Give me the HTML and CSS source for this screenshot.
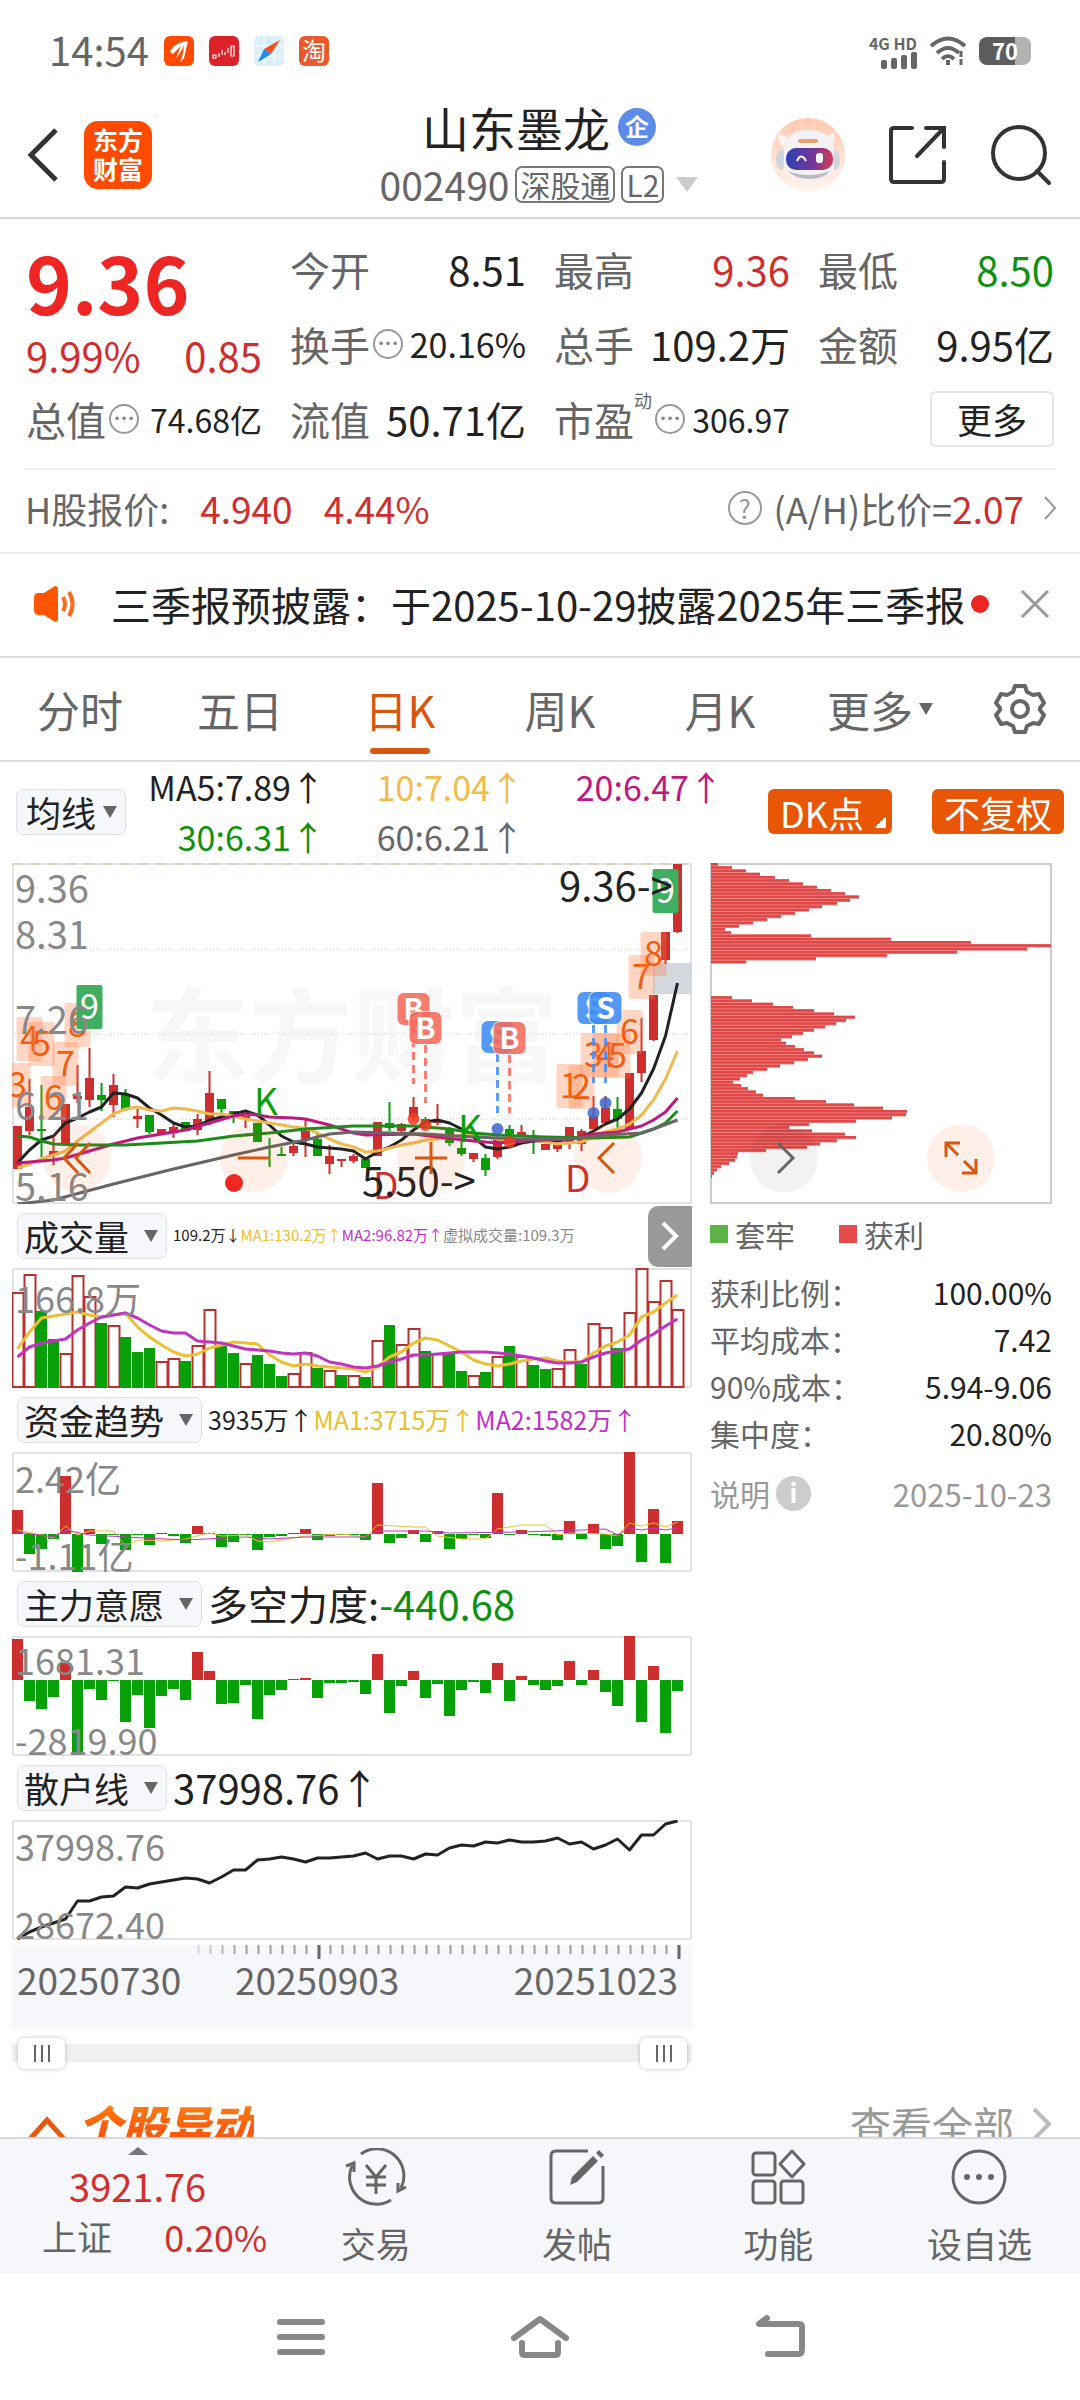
FILE: index.html
```html
<!DOCTYPE html>
<html lang="zh-CN">
<head>
  <meta charset="UTF-8" />
  <meta name="viewport" content="width=device-width, initial-scale=1.0"/>
  <title>山东墨龙 002490</title>
  <link rel="stylesheet" href="styles.css">
</head>
<body>
  <div class="status-bar">
    <span class="clock">14:54</span>
    <svg class="app-dot" viewBox="0 0 30 30"><rect width="30" height="30" rx="6" fill="#ff4a00"/><path d="M6 15C10 9 15 6 24 5L20 22Q18 25 16 26Q20 17 20 9Q17 17 12 22Q15 15 17 10Q12 15 9 18Q7 18 6 15Z" fill="#fff"/></svg>
    <svg class="app-dot" viewBox="0 0 30 30"><rect width="30" height="30" rx="6" fill="#dc2128"/><path d="M4 19h3v3H4zM10 17v4M13 14v5M16 16v3M19 12v5M22 10h3v10h-3z" fill="none" stroke="#fff" stroke-width="1.2"/></svg>
    <svg class="app-dot" viewBox="0 0 30 30"><rect width="30" height="30" rx="6" fill="#dceefb"/><path d="M10 0V30M20 0V30M0 10H30M0 20H30" stroke="#fff"/><path d="M26 4L10 13L17 18Z" fill="#f4501e"/><path d="M4 26L10 13L17 18Z" fill="#1e8df2"/></svg>
    <span class="app-dot app-tao">淘</span>
    <span class="status-right">
      <span class="signal"><span>4G HD</span>
        <svg viewBox="0 0 36 17" width="36" height="17" fill="#666"><rect y="8" width="6" height="9" rx="2"/><rect x="10" y="6" width="6" height="11" rx="2"/><rect x="20" y="3" width="6" height="14" rx="2"/><rect x="30" width="6" height="17" rx="2"/></svg>
      </span>
      <svg viewBox="0 0 38 30" width="38" height="30" fill="none" stroke="#666" stroke-width="4"><path d="M2 10Q19 -5 36 10M8 17Q19 7 30 17"/><path d="M13 23Q19 17 25 23"/><path d="M19 24v5"/><path d="M32 15v6M32 23v6" stroke-width="3"/></svg>
      <span class="battery">70</span>
    </span>
  </div>

  <header>
    <div class="header-left">
      <button class="icon-btn" aria-label="返回"><svg viewBox="0 0 34 56" width="34" height="56" fill="none" stroke="#333" stroke-width="5"><path d="M30 3L5 28L30 53"/></svg></button>
      <a class="logo" href="#">东方<br>财富</a>
    </div>
    <div class="header-title">
      <h1>山东墨龙<span class="corp">企</span></h1>
      <p class="code">002490<span class="tag">深股通</span><span class="tag">L2</span><i class="tri"></i></p>
    </div>
    <div class="header-right">
      <button class="icon-btn" aria-label="助手">
        <svg viewBox="0 0 76 76" width="76" height="76">
          <defs><linearGradient id="halo" x2="0" y2="1"><stop stop-color="#ffc9ae"/><stop offset="1" stop-color="#fff6f0"/></linearGradient><linearGradient id="visor"><stop stop-color="#2c3fb4"/><stop offset=".6" stop-color="#7a3796"/><stop offset="1" stop-color="#d23b55"/></linearGradient></defs>
          <circle cx="38" cy="38" r="37" fill="url(#halo)"/>
          <path d="M9 16Q12 20 18 18L14 30Q6 24 9 16ZM63 15Q60 20 54 18L60 30Q68 24 63 15Z" fill="#f8f4f4"/>
          <ellipse cx="11" cy="43" rx="5" ry="10" fill="#d2d3dc"/><ellipse cx="65" cy="43" rx="5" ry="10" fill="#d2d3dc"/>
          <path d="M14 36Q14 13 38 13Q62 13 64 36V50Q62 61 38 61Q16 61 14 50Z" fill="#f4f2f5"/>
          <path d="M18 54Q38 62 60 54Q54 62 38 62Q24 61 18 54Z" fill="#b9bac6"/>
          <rect x="28" y="22" width="20" height="4" rx="2" fill="#e7a173"/>
          <rect x="16" y="31" width="47" height="22" rx="10" fill="url(#visor)"/>
          <path d="M27 44Q31 35 36 44" fill="none" stroke="#fff" stroke-width="2"/><rect x="46" y="36" width="7" height="10" rx="3" fill="#fff"/>
        </svg>
      </button>
      <button class="icon-btn" aria-label="分享"><svg viewBox="0 0 60 60" width="60" height="60" fill="none" stroke="#333" stroke-width="4" stroke-linecap="round"><path d="M24 3H6Q3 3 3 6V54Q3 57 6 57H53Q56 57 56 54V37M38 3H56V22M55 4L29 31"/></svg></button>
      <button class="icon-btn" aria-label="搜索"><svg viewBox="0 0 62 62" width="62" height="62" fill="none" stroke="#333" stroke-width="4" stroke-linecap="round"><circle cx="29" cy="29" r="26"/><path d="M47 47L59 59"/></svg></button>
    </div>
  </header>

  <main>
    <section class="quote">
      <div class="price">
        <strong>9.36</strong>
        <p><span>9.99%</span><span>0.85</span></p>
      </div>
      <div class="item"><span>今开</span><b>8.51</b></div>
      <div class="item"><span>最高</span><b class="up">9.36</b></div>
      <div class="item"><span>最低</span><b class="down">8.50</b></div>
      <div class="item"><span>换手<i class="more-dot">•••</i></span><b class="mid">20.16%</b></div>
      <div class="item"><span>总手</span><b>109.2万</b></div>
      <div class="item"><span>金额</span><b>9.95亿</b></div>
      <div class="item"><span>总值<i class="more-dot">•••</i></span><b class="small">74.68亿</b></div>
      <div class="item"><span>流值</span><b>50.71亿</b></div>
      <div class="item"><span>市盈<sup>动</sup><i class="more-dot">•••</i></span><b class="small">306.97</b></div>
      <div class="item item-btn"><button>更多</button></div>
    </section>

    <section class="h-share">
      <span>H股报价:</span><b>4.940</b><b>4.44%</b>
      <a href="#"><i class="ask">?</i>(A/H)比价=<b>2.07</b><svg viewBox="0 0 12 24" width="12" height="24" fill="none" stroke="#999" stroke-width="2"><path d="M1 1L11 12L1 23"/></svg></a>
    </section>

    <section class="news">
      <svg viewBox="0 0 44 36" width="44" height="36"><path d="M0 12Q0 7 5 7H10L21 0Q24 0 24 3V33Q24 36 21 36L10 29H5Q0 29 0 24Z" fill="#ff5500"/><path d="M29 11Q33 18 29 25M35 6Q42 18 35 30" fill="none" stroke="#ff6a1f" stroke-width="4"/></svg>
      <p>三季报预披露：于2025-10-29披露2025年三季报</p>
      <i class="red-dot"></i>
      <button class="icon-btn" aria-label="关闭"><svg viewBox="0 0 30 30" width="30" height="30" stroke="#999" stroke-width="3"><path d="M2 2L28 28M28 2L2 28"/></svg></button>
    </section>

    <nav class="tabs">
      <button>分时</button>
      <button>五日</button>
      <button class="active">日K</button>
      <button>周K</button>
      <button>月K</button>
      <button>更多<i class="tri"></i></button>
      <button class="gear" aria-label="设置"><svg viewBox="0 0 52 52" width="52" height="52" fill="none" stroke="#666" stroke-width="4" stroke-linejoin="round"><path d="M21 3H31L33 9L39 12L45 11L50 20L46 25V27L50 32L45 41L39 40L33 43L31 49H21L19 43L13 40L7 41L2 32L6 27V25L2 20L7 11L13 12L19 9Z"/><circle cx="26" cy="26" r="8"/></svg></button>
    </nav>

    <section class="ma">
      <span class="drop drop-ma"><select aria-label="均线"><option>均线</option></select></span>
      <div class="ma-list">
        <span class="c-dark">MA5:7.89↑</span>
        <span class="c-gold">10:7.04↑</span>
        <span class="c-pink">20:6.47↑</span>
        <span class="down">30:6.31↑</span>
        <span class="c-grey">60:6.21↑</span>
      </div>
      <button class="pill pill-dk">DK点</button>
      <button class="pill">不复权</button>
    </section>

    <section class="charts">
      <div class="col-k">
        <div class="chart-wrap">
          <svg id="kline" viewBox="0 0 680 341"></svg>
          <div class="tools">
            <button aria-label="快退"><svg viewBox="0 0 34 34" width="34" height="34"><path d="M18 2L4 17L18 32M30 2L16 17L30 32"/></svg></button>
            <button aria-label="缩小"><svg viewBox="0 0 34 34" width="34" height="34"><path d="M1 17H33"/></svg></button>
            <button aria-label="放大"><svg viewBox="0 0 34 34" width="34" height="34"><path d="M1 17H33M17 1V33"/></svg></button>
            <button aria-label="后退"><svg viewBox="0 0 34 34" width="34" height="34"><path d="M23 2L8 17L23 32"/></svg></button>
          </div>
        </div>

        <div class="sub-head sub-volume">
          <span class="drop"><select aria-label="指标一"><option>成交量</option></select></span>
          <p class="tiny"><span class="c-dark">109.2万↓</span><span class="c-yellow">MA1:130.2万↑</span><span class="c-purple">MA2:96.82万↑</span><span class="c-light">虚拟成交量:109.3万</span></p>
          <button class="next" aria-label="展开"><svg viewBox="0 0 18 30" width="18" height="30" fill="none" stroke="#fff" stroke-width="4"><path d="M2 2L15 15L2 28"/></svg></button>
        </div>
        <svg id="volume" viewBox="0 0 680 120"></svg>

        <div class="sub-head">
          <span class="drop"><select aria-label="指标二"><option>资金趋势</option></select></span>
          <p class="medium"><span class="c-dark">3935万↑</span><span class="c-yellow">MA1:3715万↑</span><span class="c-purple">MA2:1582万↑</span></p>
        </div>
        <svg id="fund" viewBox="0 0 680 120"></svg>

        <div class="sub-head">
          <span class="drop"><select aria-label="指标三"><option>主力意愿</option></select></span>
          <p><span class="c-dark">多空力度:</span><span class="down">-440.68</span></p>
        </div>
        <svg id="force" viewBox="0 0 680 120"></svg>

        <div class="sub-head">
          <span class="drop"><select aria-label="指标四"><option>散户线</option></select></span>
          <p><span class="c-dark">37998.76↑</span></p>
        </div>
        <svg id="retail" viewBox="0 0 680 120"></svg>
        <svg id="axis" viewBox="0 0 680 84"></svg>

        <div class="range">
          <input type="range" aria-label="开始日期" min="0" max="100" value="0">
          <input type="range" aria-label="结束日期" min="0" max="100" value="100">
        </div>
      </div>

      <aside class="col-chips">
        <div class="chart-wrap">
          <svg id="chips" viewBox="0 0 342 341"></svg>
          <div class="tools tools-right">
            <button class="grey" aria-label="前进"><svg viewBox="0 0 34 34" width="34" height="34"><path d="M11 2L26 17L11 32"/></svg></button>
            <button aria-label="全屏"><svg viewBox="0 0 34 34" width="34" height="34"><path d="M2 16V2H16M2 2L14 14M20 20L32 32M32 18V32H18"/></svg></button>
          </div>
        </div>
        <p class="legend"><i class="sq sq-green"></i><span>套牢</span><i class="sq"></i><span>获利</span></p>
        <dl>
          <div><dt>获利比例：</dt><dd>100.00%</dd></div>
          <div><dt>平均成本：</dt><dd>7.42</dd></div>
          <div><dt>90%成本：</dt><dd>5.94-9.06</dd></div>
          <div><dt>集中度：</dt><dd>20.80%</dd></div>
        </dl>
        <p class="note"><span>说明</span><i class="info">i</i><time>2025-10-23</time></p>
      </aside>
    </section>

    <section class="moves">
      <svg viewBox="0 0 38 38" width="38" height="38" fill="none" stroke="#e65a10" stroke-width="5"><path d="M2 34L19 15L36 34"/></svg>
      <h2>个股异动</h2>
      <a href="#">查看全部<svg viewBox="0 0 20 34" width="20" height="34" fill="none" stroke="#bbb" stroke-width="4"><path d="M2 2L17 17L2 32"/></svg></a>
    </section>
  </main>

  <footer>
    <a class="index" href="#"><i></i><b>3921.76</b><span>上证<em>0.20%</em></span></a>
    <button><svg viewBox="0 0 64 58" width="64" height="58" fill="none" stroke="#666" stroke-width="3"><path d="M17 6A27 27 0 0 1 57 40M47 52A27 27 0 0 1 8 18"/><path d="M2 18L10 15V24M62 39L54 43V35M22 17L32 29L42 17M22 29H42M22 37H42M32 29V46"/></svg>交易</button>
    <button><svg viewBox="0 0 58 58" width="58" height="58" fill="none" stroke="#666" stroke-width="3"><path d="M40 3H8Q3 3 3 8V50Q3 55 8 55H50Q55 55 55 50V18"/><path d="M22 37L24 29L45 8L50 13L29 34ZM48 5L51 2L56 7L53 10Z" fill="#666" stroke="none"/></svg>发帖</button>
    <button><svg viewBox="0 0 56 58" width="56" height="58" fill="none" stroke="#666" stroke-width="3"><rect x="3" y="5" width="22" height="22" rx="3"/><path d="M42 3L54 16L42 29L30 16Z" stroke-linejoin="round"/><rect x="3" y="33" width="22" height="22" rx="3"/><rect x="31" y="33" width="22" height="22" rx="3"/></svg>功能</button>
    <button><svg viewBox="0 0 58 58" width="58" height="58" fill="#666"><circle cx="29" cy="29" r="26" fill="none" stroke="#666" stroke-width="3"/><circle cx="17" cy="29" r="3"/><circle cx="29" cy="29" r="3"/><circle cx="41" cy="29" r="3"/></svg>设自选</button>
  </footer>

  <div class="sys-nav">
    <button aria-label="菜单"><svg viewBox="0 0 58 44" width="58" height="44" stroke="#888" stroke-width="6" stroke-linecap="round"><path d="M9 7H51M9 22H51M9 37H51"/></svg></button>
    <button aria-label="主页"><svg viewBox="0 0 58 44" width="58" height="44" fill="none" stroke="#888" stroke-width="6" stroke-linecap="round" stroke-linejoin="round"><path d="M3 23L29 4L55 23M11 28V37Q11 40 14 40H44Q47 40 47 37V28"/></svg></button>
    <button aria-label="返回"><svg viewBox="0 0 58 44" width="58" height="44" fill="none" stroke="#888" stroke-width="6" stroke-linecap="round" stroke-linejoin="round"><path d="M16 3L8 9H48Q51 9 51 12V34Q51 39 48 39H17"/></svg></button>
  </div>

  <script src="charts.js"></script>
</body>
</html>
```

FILE: styles.css
```css
* {
  box-sizing: border-box;
}

body {
  margin: 0;
  height: 100vh;
  display: flex;
  flex-direction: column;
  font-family: "Noto Sans CJK SC", sans-serif;
  background-color: #fff;
  color: #666;
}

h1, h2, p, dl, dd {
  margin: 0;
  font-weight: normal;
}

i, em {
  font-style: normal;
}

b {
  font-weight: normal;
}

a {
  color: inherit;
  text-decoration: none;
}

button, select {
  font-family: inherit;
  border: none;
  padding: 0;
  margin: 0;
  background: none;
  color: inherit;
  cursor: pointer;
}

svg {
  display: block;
}

.icon-btn {
  display: flex;
}

.c-dark { color: #222; }
.c-gold { color: #f3bb4a; }
.c-pink { color: #c0187e; }
.c-grey { color: #666; }
.c-light { color: #888; }
.c-yellow { color: #e8c02c; }
.c-purple { color: #c22fc8; }
.up { color: #cf2e2e !important; }
.down { color: #109010 !important; }

/* status bar */
.status-bar {
  height: 98px;
  padding: 4px 49px 0;
  display: flex;
  align-items: center;
  gap: 15px;
  flex: none;
}

.clock {
  font-size: 40px;
  line-height: 50px;
  padding-bottom: 4px;
}

.app-dot {
  width: 30px;
  height: 30px;
}

.app-tao {
  border-radius: 6px;
  background-color: #e8592b;
  color: #fff;
  font-size: 24px;
  line-height: 28px;
  text-align: center;
}

.status-right {
  margin-left: auto;
  display: flex;
  align-items: center;
  gap: 12px;
}

.signal {
  display: flex;
  flex-direction: column;
  align-items: flex-end;
  font-size: 16px;
  font-weight: bold;
  line-height: 18px;
}

.battery {
  width: 52px;
  height: 28px;
  border-radius: 8px;
  background: linear-gradient(to right, #5d5d5d 70%, #b2b2b2 70%);
  color: #fff;
  font-size: 22px;
  font-weight: bold;
  line-height: 26px;
  text-align: center;
}

/* header */
header {
  height: 121px;
  padding: 0 28px 12px 26px;
  display: grid;
  grid-template-columns: 1fr auto 1fr;
  align-items: center;
  border-bottom: 2px solid #d9d9d9;
  flex: none;
}

.header-left, .header-right {
  display: flex;
  align-items: center;
}

.header-left {
  gap: 24px;
}

.header-right {
  justify-content: flex-end;
  gap: 42px;
}

.logo {
  width: 68px;
  height: 68px;
  border-radius: 14px;
  background-color: #ff4a00;
  color: #fff;
  font-size: 25px;
  font-weight: bold;
  line-height: 29px;
  padding-top: 4px;
  text-align: center;
}

h1 {
  display: flex;
  align-items: center;
  justify-content: center;
  gap: 8px;
  font-size: 47px;
  line-height: 58px;
  color: #222;
}

.corp {
  width: 38px;
  height: 38px;
  border-radius: 50%;
  background-color: #5f8be8;
  color: #fff;
  font-size: 24px;
  font-weight: bold;
  line-height: 36px;
  text-align: center;
}

.code {
  display: flex;
  align-items: center;
  gap: 6px;
  font-size: 39px;
  line-height: 56px;
}

.tag {
  height: 37px;
  padding: 0 3px;
  border: 2px solid #777;
  border-radius: 7px;
  font-size: 30px;
  line-height: 32px;
}

.tri {
  border: 11px solid transparent;
  border-top: 15px solid #ccc;
  border-bottom: 0;
  margin-left: 6px;
}

/* quote */
main {
  flex: 1;
  min-height: 0;
  overflow: hidden;
}

.quote {
  margin: 0 24px;
  padding: 12px 2px;
  display: grid;
  grid-template-columns: repeat(4, 1fr);
  grid-template-rows: repeat(3, 75px);
  column-gap: 28px;
  border-bottom: 2px solid #f2f2f2;
}

.price {
  grid-row: span 2;
  color: #cf2e2e;
}

.price strong {
  display: block;
  font-size: 78px;
  line-height: 100px;
  color: #ef2524;
}

.price p {
  display: flex;
  justify-content: space-between;
  font-size: 40px;
  line-height: 48px;
}

.item {
  display: flex;
  align-items: center;
  justify-content: space-between;
  white-space: nowrap;
  font-size: 40px;
}

.item span {
  display: flex;
  align-items: center;
}

.item b {
  color: #222;
}

.item .mid {
  font-size: 34px;
}

.item .small {
  font-size: 32px;
}

.item sup {
  align-self: flex-start;
  font-size: 18px;
  line-height: 20px;
}

.more-dot {
  width: 30px;
  height: 30px;
  margin-left: 3px;
  border: 2px solid #999;
  border-radius: 50%;
  font-family: "DejaVu Sans", sans-serif;
  font-size: 12px;
  line-height: 26px;
  text-align: center;
  color: #888;
}

.item-btn {
  justify-content: flex-end;
}

.item-btn button {
  width: 124px;
  height: 56px;
  border: 2px solid #e6e6e6;
  border-radius: 6px;
  font-size: 35px;
  line-height: 50px;
  color: #222;
}

.h-share {
  height: 84px;
  padding: 0 24px 6px 25px;
  display: flex;
  align-items: center;
  font-size: 36px;
  border-bottom: 2px solid #eee;
}

.h-share b {
  color: #cf2e2e;
  font-size: 37px;
  margin-left: 31px;
}

.h-share a {
  margin-left: auto;
  display: flex;
  align-items: center;
}

.h-share a b {
  margin: 0 20px 0 0;
}

.ask {
  width: 34px;
  height: 34px;
  margin-right: 12px;
  border: 2px solid #999;
  border-radius: 50%;
  color: #999;
  font-size: 26px;
  line-height: 30px;
  text-align: center;
}

.news {
  height: 104px;
  padding: 0 30px 2px 34px;
  display: flex;
  align-items: center;
  border-bottom: 2px solid #ddd;
}

.news p {
  margin-left: 33px;
  font-size: 40px;
  color: #222;
  white-space: nowrap;
}

.red-dot {
  width: 18px;
  height: 18px;
  margin-left: auto;
  margin-right: 31px;
  border-radius: 50%;
  background-color: #ef2524;
}

/* period tabs */
.tabs {
  height: 104px;
  display: flex;
  border-bottom: 2px solid #ddd;
}

.tabs button {
  flex: 4;
  display: flex;
  align-items: center;
  justify-content: center;
  position: relative;
  font-size: 43px;
}

.tabs .gear {
  flex: 3;
}

.tabs .active {
  color: #d9560f;
}

.tabs .active::after {
  content: "";
  position: absolute;
  bottom: 6px;
  width: 60px;
  height: 6px;
  border-radius: 3px;
  background-color: #d9560f;
}

.tabs .tri {
  border-width: 12px 7px 0;
  border-top-color: #666;
}

/* moving averages */
.ma {
  height: 101px;
  padding: 0 16px 2px;
  display: flex;
  align-items: center;
}

.drop {
  position: relative;
  flex: none;
  display: flex;
}

.drop select {
  appearance: none;
  height: 46px;
  padding: 0 36px 0 6px;
  border: 1px solid #dcdfe5;
  border-radius: 7px;
  background-color: #f6f7fa;
  color: #222;
  font-size: 35px;
  line-height: 42px;
}

.drop::after {
  content: "";
  position: absolute;
  right: 9px;
  top: 17px;
  border: 7px solid transparent;
  border-top: 12px solid #666;
  border-bottom: 0;
  pointer-events: none;
}

.drop-ma select {
  padding: 0 28px 0 9px;
}

.ma-list {
  flex: 1;
  max-width: 597px;
  display: grid;
  grid-template-columns: repeat(3, 1fr);
  font-size: 34px;
  line-height: 50px;
  text-align: right;
}

.pill {
  height: 45px;
  padding: 0 12px;
  margin-left: 40px;
  border-radius: 6px;
  background-color: #e85606;
  color: #fff;
  font-size: 36px;
  line-height: 42px;
  white-space: nowrap;
}

.pill-dk {
  margin-left: auto;
  padding-right: 28px;
  background-image: linear-gradient(135deg, transparent 50%, #fff 50%);
  background-size: 12px 12px;
  background-position: right 6px bottom 6px;
  background-repeat: no-repeat;
}

/* charts */
.charts {
  padding: 0 28px 0 12px;
  display: flex;
  align-items: flex-start;
  gap: 18px;
}

.col-k {
  flex: 680;
  min-width: 0;
}

.col-chips {
  flex: 342;
  min-width: 0;
  font-size: 30px;
}

.col-k > svg, .chart-wrap > svg {
  width: 100%;
  overflow: hidden;
}

.chart-wrap {
  position: relative;
}

.tools {
  position: absolute;
  left: 31px;
  right: 50px;
  bottom: 12px;
  display: flex;
  justify-content: space-between;
}

.tools-right {
  left: 40px;
  right: 57px;
}

.tools button {
  width: 68px;
  height: 68px;
  display: flex;
  align-items: center;
  justify-content: center;
  border-radius: 50%;
  background-color: rgba(240, 90, 10, 0.09);
}

.tools path {
  fill: none;
  stroke: #d9560f;
  stroke-width: 3;
}

.tools .grey {
  background-color: rgba(0, 0, 0, 0.05);
}

.tools .grey path {
  stroke: #666;
}

.sub-head {
  height: 64px;
  padding-left: 5px;
  display: flex;
  align-items: center;
  gap: 6px;
  white-space: nowrap;
}

.sub-head p {
  padding-bottom: 2px;
  font-size: 40px;
  line-height: 46px;
}

.sub-head .tiny {
  font-size: 15px;
}

.sub-head .medium {
  font-size: 25px;
}

.next {
  width: 44px;
  height: 61px;
  margin-left: auto;
  display: flex;
  align-items: center;
  justify-content: center;
  border-radius: 10px 0 0 10px;
  background-color: #999;
}

#axis {
  margin-top: 5px;
  background-color: #f6f7fa;
}

.range {
  position: relative;
  height: 32px;
  margin-top: 8px;
  background: linear-gradient(#f0f0f3, #f0f0f3) center / 100% 18px no-repeat;
}

.range input {
  appearance: none;
  position: absolute;
  left: 6px;
  width: calc(100% - 11px);
  height: 32px;
  margin: 0;
  background: none;
  pointer-events: none;
}

.range input::-webkit-slider-thumb {
  appearance: none;
  pointer-events: auto;
  width: 47px;
  height: 31px;
  border-radius: 6px;
  box-shadow: 0 0 4px rgba(0, 0, 0, 0.25);
  background:
    linear-gradient(#666, #666) 16px 7px / 2px 17px no-repeat,
    linear-gradient(#666, #666) 23px 7px / 2px 17px no-repeat,
    linear-gradient(#666, #666) 30px 7px / 2px 17px no-repeat,
    #fff;
}

.legend {
  display: flex;
  align-items: center;
  margin-top: 8px;
  line-height: 44px;
}

.legend span {
  margin: 0 44px 0 7px;
}

.sq {
  width: 18px;
  height: 18px;
  background-color: #e64a4a;
}

.sq-green {
  background-color: #5ab445;
}

dl {
  margin-top: 13px;
}

dl div {
  display: flex;
  justify-content: space-between;
  line-height: 47px;
}

dd {
  color: #222;
}

.note {
  margin-top: 13px;
  display: flex;
  align-items: center;
  line-height: 47px;
  color: #999;
}

.note time {
  margin-left: auto;
  font-size: 31px;
}

.info {
  width: 35px;
  height: 35px;
  margin-left: 6px;
  border-radius: 50%;
  background-color: #ccc;
  color: #fff;
  font-weight: bold;
  font-size: 26px;
  line-height: 32px;
  text-align: center;
}

.moves {
  margin-top: 25px;
  padding: 0 28px;
  display: flex;
  align-items: center;
}

.moves h2 {
  margin-left: 12px;
  font-size: 44px;
  line-height: 60px;
  font-weight: 900;
  font-style: italic;
  color: transparent;
  background: linear-gradient(#ff8a10, #fb5a0c 60%);
  background-clip: text;
}

.moves a {
  margin-left: auto;
  display: flex;
  align-items: center;
  gap: 18px;
  font-size: 41px;
  color: #999;
}

/* bottom bar */
footer {
  height: 137px;
  display: flex;
  flex: none;
  border-top: 2px solid #d5d7db;
  background-color: #f6f7fa;
}

.index {
  flex: 275;
  display: flex;
  flex-direction: column;
  align-items: center;
  color: #d32f2f;
}

.index i {
  margin-top: 8px;
  border: 10px solid transparent;
  border-bottom: 8px solid #777;
  border-top: 0;
}

.index b {
  margin-top: 4px;
  font-size: 38px;
  line-height: 54px;
}

.index span {
  width: 100%;
  padding: 0 8px 0 42px;
  display: flex;
  justify-content: space-between;
  font-size: 35px;
  line-height: 46px;
  color: #666;
}

.index em {
  font-size: 36px;
  color: #d32f2f;
}

footer button {
  flex: 201;
  display: flex;
  flex-direction: column;
  align-items: center;
  padding-top: 9px;
  font-size: 35px;
  line-height: 50px;
}

footer button svg {
  margin-bottom: 12px;
}

.sys-nav {
  height: 126px;
  padding: 0 180px;
  display: flex;
  flex: none;
}

.sys-nav button {
  flex: 1;
  display: flex;
  align-items: center;
  justify-content: center;
}

/* svg pieces */
.frame { fill: none; stroke: #e2e2e2; stroke-width: 2; }
.grid-line { stroke: #ccc; stroke-dasharray: 1 2; }
.limit-line { stroke: #d8bf98; stroke-dasharray: 10 8; }
.line { fill: none; stroke-width: 3; stroke-linejoin: round; }
.line.thin { stroke-width: 1; }
.scale { font-size: 38px; fill: #888; }
.scale-sm { font-size: 36px; fill: #888; }
.date { font-size: 37px; fill: #666; }
.note-text { font-size: 40px; fill: #222; }
.sign { font-size: 37px; }
.watermark { font-size: 103px; font-weight: bold; fill: #f7f7f7; }
.count { font-size: 34px; fill: #f25c0c; text-anchor: middle; }
.badge { font-size: 30px; font-weight: bold; fill: #fff; text-anchor: middle; }
```

FILE: charts.js
```js
const RED = "#cf2e2e";
const GREEN = "#08a008";
const STEP = 12;

const cx = i => 5.5 + STEP * i;
const rect = (x, y, w, h, fill, extra = "") =>
  `<rect x="${x}" y="${y}" width="${w}" height="${h}" fill="${fill}" ${extra}/>`;
const text = (x, y, cls, str, extra = "") =>
  `<text x="${x}" y="${y}" class="${cls}" ${extra}>${str}</text>`;
const frame = (w, h) => `<rect x="1" y="1" width="${w - 2}" height="${h - 2}" class="frame"/>`;

// one value for every candle
function line(values, color, cls = "") {
  const pts = values.map((y, i) => `${cx(i)},${y}`).join(" ");
  return `<polyline points="${pts}" class="line ${cls}" stroke="${color}"/>`;
}

// [index, y] pairs
function sparse(pairs, color, cls = "") {
  const pts = pairs.map(p => `${cx(p[0])},${p[1]}`).join(" ");
  return `<polyline points="${pts}" class="line ${cls}" stroke="${color}"/>`;
}

// up?, body top, body bottom, high, low
const candles = [
  [1,263,306,263,306],[1,244,268,216,272],[0,266,268,222,294],[1,288,292,275,302],[1,241,281,241,281],
  [1,233,236,202,240],[1,215,237,185,244],[0,232,237,220,248],[1,222,242,211,254],[0,232,247,226,248],
  [1,253,256,246,265],[0,252,269,252,271],[1,266,271,266,271],[1,264,270,260,275],[0,259,268,259,268],
  [1,256,267,251,272],[1,230,260,208,262],[0,236,246,236,251],[0,248,250,248,260],[1,253,255,253,265],
  [0,260,279,260,279],[0,283,285,275,304],[0,291,293,284,293],[1,283,290,281,293],[1,268,276,257,294],
  [0,276,293,270,293],[1,293,301,282,311],[1,296,298,296,304],[1,293,298,291,300],[0,296,305,296,305],
  [1,259,293,259,293],[0,260,265,239,268],[1,261,268,260,270],[1,244,254,234,258],[0,256,262,254,266],
  [1,258,260,241,262],[0,266,280,264,283],[0,285,291,276,293],[1,290,296,290,299],[0,295,307,291,313],
  [1,276,294,270,296],[0,266,271,262,276],[1,269,272,262,274],[0,277,279,267,291],[1,281,287,281,287],
  [1,282,286,280,289],[1,264,281,264,286],[1,268,281,266,288],[1,253,266,233,266],[1,245,260,233,260],
  [0,246,256,234,265],[1,210,266,210,266],[1,188,210,155,219],[1,132,177,132,178],[1,69,97,69,101],[1,1,69,1,70]
];

const ma5 = [300,287,277,273,260,255,249,244,230,231,235,245,252,260,264,263,257,254,251,248,252,262,273,279,281,284,285,286,288,
  296,289,284,277,267,259,257,260,266,274,284,286,284,280,278,278,278,276,274,268,261,256,246,230,206,173,120];
const ma10 = [305,301,296,292,288,278,269,260,251,246,244,247,248,245,246,248,251,251,253,256,258,260,262,264,265,270,276,281,284,
  289,288,285,282,280,277,276,274,272,272,274,276,278,278,277,279,281,280,279,274,269,266,261,252,237,216,188];
const ma20 = [[0,300],[3,297],[4,295],[6,288],[8,281],[10,275],[12,271],[14,267],[16,260],[18,253],[19,251],[20,252],[21,254],[23,255],[24,256],
  [26,262],[28,270],[29,272],[33,271],[35,274],[38,278],[40,280],[42,278],[46,276],[48,271],[50,269],[51,266],[52,263],[53,257],[54,249],[55,235]];
const ma30 = [[0,273],[1,274],[2,278],[3,281],[5,282],[9,282],[12,280],[15,278],[18,273],[21,270],[24,266],[28,263],[33,263],[36,266],[38,270],
  [40,272],[44,274],[48,275],[51,274],[53,266],[54,260],[55,248]];
const ma60 = [[0,341],[3,337],[8,321],[13,306],[18,292],[21,284],[24,277],[26,271],[28,269],[34,271],[38,274],[42,276],[46,276],[49,272],[52,270],[53,266],[55,257]];

// candle index, top, digit
const counts = [[0,200,3],[1,154,4],[2,159,5],[3,213,6],[4,179,7],[5,140,8],[6,122,9],
  [46,201,1],[47,202,2],[48,170,3],[49,170,4],[50,171,5],[51,147,6],[52,92,7],[53,69,8],[54,6,9]];
// candle index, centre, letter, end of dashes, dot
const trades = [[33,146,"B",221,256],[34,165,"B",240,262],[40,174,"S",250,266],[41,175,"B",250,279],[48,145,"S",220,250],[49,145,"S",220,240]];

function drawKline() {
  let s = text(134, 212, "watermark", "东方财富");
  [86, 171, 256].forEach(y => s += `<line x1="0" x2="680" y1="${y}" y2="${y}" class="grid-line"/>`);
  s += frame(680, 341) + `<line x1="0" x2="680" y1="1" y2="1" class="limit-line"/>`;
  s += rect(641, 100, 39, 31, "#d3d8de");
  candles.forEach(([up, top, bottom, high, low], i) => {
    const c = up ? RED : GREEN;
    s += rect(cx(i) - 1, high, 2, low - high, c) + rect(cx(i) - 4.5, top, 9, bottom - top, c);
  });
  s += line(ma5, "#222") + line(ma10, "#f0b84e") + sparse(ma20, "#c0187e") + sparse(ma30, "#1a8c1a") + sparse(ma60, "#666");
  counts.forEach(([i, y, n]) => {
    s += n === 9
      ? rect(cx(i) - 13, y, 26, 44, "#3eae60", 'rx="2"') + text(cx(i), y + 34, "count", n, 'style="fill:#fff"')
      : rect(cx(i) - 13, y, 26, 44, "rgba(255,120,60,.3)", 'rx="2"') + text(cx(i), y + 34, "count", n);
  });
  trades.forEach(([i, y, t, end, dot]) => {
    const c = t === "B" ? "#f46a5c" : "#3f8df8";
    s += `<line x1="${cx(i)}" x2="${cx(i)}" y1="${y + 17}" y2="${end}" stroke="${c}" stroke-width="3" stroke-dasharray="8 5" opacity=".85"/>`;
    s += rect(cx(i) - 16.5, y - 16.5, 33, 33, c, 'rx="7" stroke="#fff" opacity=".88"') + text(cx(i), y + 11, "badge", t);
    s += `<circle cx="${cx(i)}" cy="${dot}" r="6" fill="${t === "B" ? "#ee3a22" : "#3d66cc"}" opacity=".85"/>`;
  });
  s += text(242, 252, "sign", "K", `fill="${GREEN}"`) + text(446, 279, "sign", "K", `fill="${GREEN}"`);
  s += text(361, 336, "sign", "D", `fill="${RED}"`) + text(553, 329, "sign", "D", `fill="${RED}"`);
  s += `<circle cx="222" cy="320" r="9" fill="#ef2524"/>`;
  [[40, "9.36"], [86, "8.31"], [171, "7.26"], [257, "6.21"], [338, "5.16"]].forEach(l => s += text(3, l[0], "scale", l[1]));
  s += text(547, 38, "note-text", "9.36-&gt;") + text(350, 333, "note-text", "5.50-&gt;");
  document.getElementById("kline").innerHTML = s;
}

const volumes = [95,113,-77,-49,34,112,91,-65,62,-51,-36,-40,26,29,-27,42,78,-42,-35,24,-33,-24,-12,14,35,-20,17,-13,12,-11,
  47,-63,43,59,-37,34,-34,-17,12,-16,31,-42,31,-23,-19,19,38,-24,64,60,-40,75,119,86,107,78];
const volMa1 = [81,64,50,48,46,44,47,49,47,45,59,69,77,84,88,86,80,77,74,75,76,87,94,98,96,98,99,100,101,104,
  99,89,84,75,70,72,78,84,92,96,98,96,93,91,90,93,94,94,85,78,74,67,49,44,35,27];
const volMa2 = [89,79,75,73,71,62,55,49,47,45,50,57,63,65,65,73,74,75,78,81,82,83,85,86,85,88,94,96,99,100,
  98,94,91,87,87,86,85,84,84,84,85,86,88,90,93,95,95,94,89,85,83,81,72,66,58,51];

function drawVolume() {
  let s = frame(680, 120);
  volumes.forEach((v, i) => {
    const h = Math.abs(v);
    s += v > 0
      ? rect(cx(i) - 5, 120 - h, 11, h - 1, "#fff", `stroke="#b93030" stroke-width="2"`)
      : rect(cx(i) - 5.5, 120 - h, 11, h, GREEN);
  });
  s += line(volMa1, "#ecc035") + line(volMa2, "#c035c0") + text(3, 45, "scale-sm", "166.8万");
  document.getElementById("volume").innerHTML = s;
}

function bars(values, base) {
  return values.map((v, i) => v > 0
    ? rect(cx(i) - 5.5, base - v, 11, v, RED)
    : rect(cx(i) - 5.5, base, 11, -v, GREEN)).join("");
}

const fund = [24,-20,-15,-5,58,-38,5,-10,-1,-16,-1,-11,1,-2,-9,8,1,-13,-8,-1,-16,-3,-2,1,5,-6,-2,-1,-1,-6,
  51,-9,-4,4,-8,3,-15,-5,-1,-4,41,-1,4,-1,-2,-6,13,-5,10,-15,-12,82,-28,25,-29,13];
const fundMa1 = [[0,78],[2,83],[3,86],[4,74],[5,83],[6,79],[8,79],[9,94],[10,88],[12,89],[14,87],[16,81],[17,84],[19,83],[20,89],[21,90],[24,84],[27,82],
  [29,85],[30,73],[33,75],[34,75],[35,84],[37,87],[39,87],[40,77],[42,73],[44,73],[45,83],[46,81],[49,82],[50,84],[51,71],[52,74],[53,71],[54,75],[55,70]];
const fundMa2 = [[0,80],[3,85],[4,78],[6,83],[9,85],[14,88],[19,85],[21,87],[24,85],[29,85],[30,79],[34,79],[36,81],[42,80],[47,78],[49,77],[50,83],[51,76],[52,78],[53,76],[54,78],[55,76]];
const force = [41,-21,-29,-17,17,-75,-9,-20,-1,-42,-15,-48,-16,-9,-20,28,9,-24,-23,-5,-39,-15,-10,1,2,-18,-3,-3,-2,-14,
  26,-33,-6,9,-18,-4,-36,-10,-2,-13,17,-21,4,-5,-10,-6,19,-5,10,-12,-26,44,-42,14,-53,-11];
const retail = [119,112,107,103,99,81,81,77,76,67,68,64,62,60,58,59,63,57,50,50,40,39,37,39,42,38,38,37,36,33,
  39,36,36,39,34,35,28,25,26,22,23,20,22,22,21,18,24,22,29,25,19,30,15,15,4,1];

function drawSubCharts() {
  document.getElementById("fund").innerHTML = frame(680, 120) + bars(fund, 82) +
    sparse(fundMa1, "#ecc035", "thin") + sparse(fundMa2, "#c035c0", "thin") +
    text(3, 41, "scale-sm", "2.42亿") + text(3, 118, "scale-sm", "-1.11亿");
  document.getElementById("force").innerHTML = frame(680, 120) + bars(force, 44) +
    text(3, 39, "scale-sm", "1681.31") + text(3, 119, "scale-sm", "-2819.90");
  document.getElementById("retail").innerHTML = frame(680, 120) + line(retail, "#222") +
    text(3, 41, "scale-sm", "37998.76") + text(3, 119, "scale-sm", "28672.40");
}

function drawAxis() {
  let s = "";
  for (let i = 15; i < 56; i++) {
    const long = i === 25 || i === 55;
    s += rect(cx(i), 0, long ? 3 : 2, long ? 14 : 9, long ? "#666" : "#999", `opacity="${Math.min(1, (i - 13) / 6)}"`);
  }
  s += text(5, 50, "date", "20250730") + text(223, 50, "date", "20250903") + text(666, 50, "date", "20251023", 'text-anchor="end"');
  document.getElementById("axis").innerHTML = s;
}

const chips = [7,21,35,49,64,78,92,106,120,134,148,139,126,111,98,84,70,56,42,28,14,20,100,180,260,340,316,246,176,105,35,
  0,0,0,0,0,0,0,0,0,0,21,41,62,82,103,123,144,135,125,114,103,92,81,70,75,84,93,103,111,97,83,69,56,42,36,29,22,30,37,45,52,
  84,115,143,172,196,195,181,145,98,78,101,134,145,126,109,96,55,27,26,24,18,10,6,3,1];

function drawChips() {
  let s = `<rect x="1" y="1" width="340" height="339" fill="none" stroke="#ccc" stroke-width="2"/>`;
  chips.forEach((w, k) => {
    const y = 3.25 * k;
    if (w) s += rect(1, y, w, 3.25, "#f08080") + rect(1, y, w, 2.5, "#e04848");
  });
  document.getElementById("chips").innerHTML = s;
}

drawKline();
drawVolume();
drawSubCharts();
drawAxis();
drawChips();
```
